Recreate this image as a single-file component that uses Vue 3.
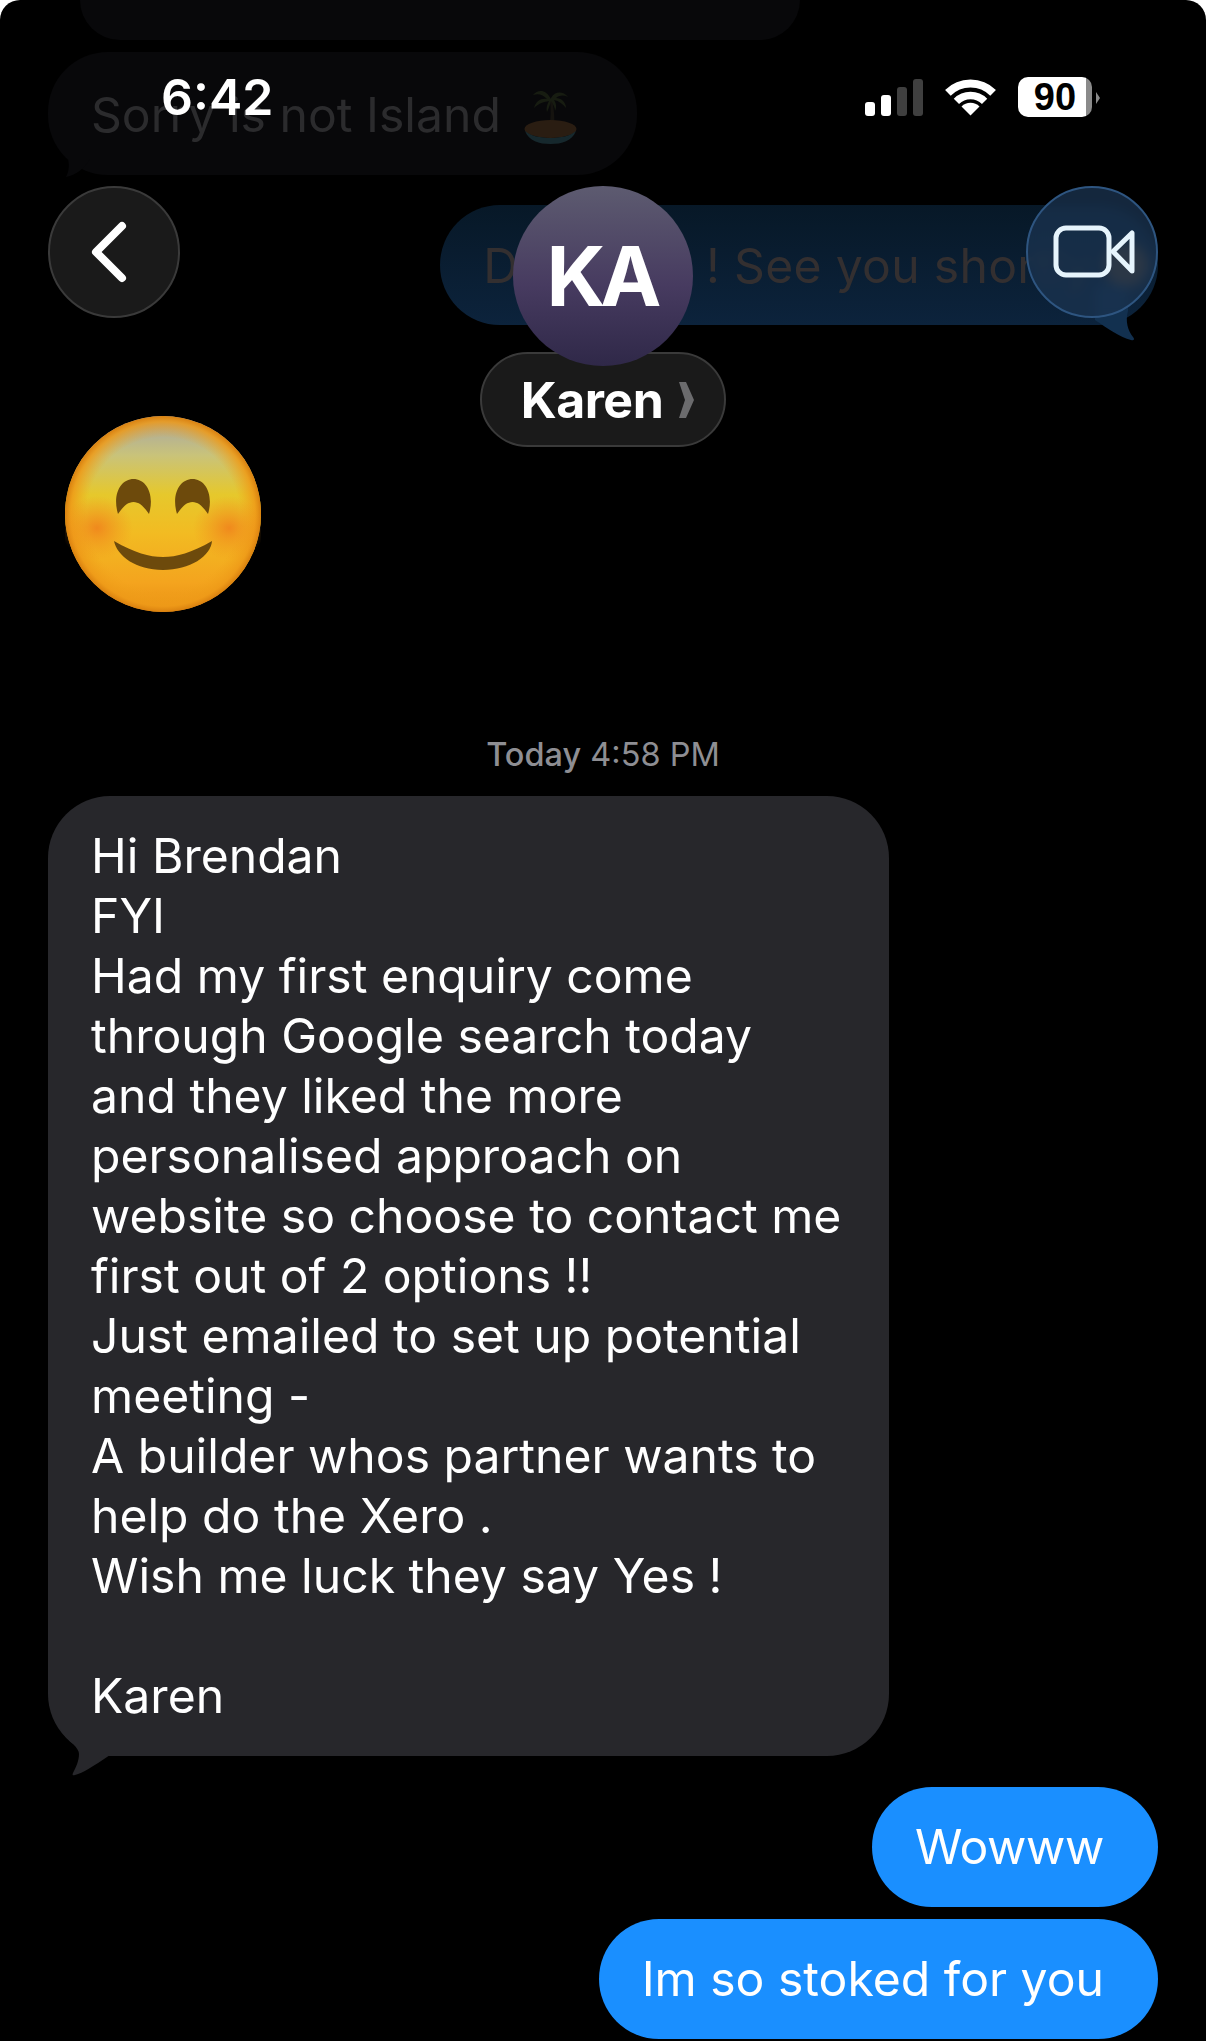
<template>
  <div class="page">
    <div class="thread">
      <div class="ghost ghost-top"></div>
      <div class="ghost ghost-island">
        <span>Sorry is not Island</span>
        <svg class="island" viewBox="0 0 53 60">
          <path d="M26 14c1 10 1 20-1 32h5c1-12 0-22-2-32z" fill="#2a2418" />
          <path d="M27 14C22 4 14 4 9 10c6-2 10 0 14 4-6-1-11 2-13 9 5-5 10-6 15-7-2 4-3 7-2 11 2-4 3-8 4-11 2 3 4 6 4 10 2-4 1-8-1-11 5 1 9 4 12 8 0-6-5-10-10-10 4-3 8-3 12-1-5-6-13-6-17 1z" fill="#2e3a1c" />
          <ellipse cx="26.500" cy="44" rx="26" ry="9" fill="#5e3d1e" />
          <path d="M1 46c4 10 14 13 25.500 13S48 56 52 46c-6 5-15 7-25.500 7S7 51 1 46z" fill="#2d5a63" />
        </svg>
        <svg class="tail tail-ghost" viewBox="0 0 30 30">
          <path d="M4 0C6 8 4 14 2 18c10-2 18-8 24-18z" fill="#08080a" />
        </svg>
      </div>
      <div class="ghost-sent">
        <span>Done too ! See you shortly</span>
        <i class="ghost-emoji"></i>
        <svg class="tail tail-sent" viewBox="0 0 50 60">
          <path d="M5 35C18 44 30 52 41 55c3 1 4-1 2-3-5-6-8-16-5-26V0H5z" fill="#12304f" />
        </svg>
      </div>

      <svg class="smiley" viewBox="0 0 196 196">
        <defs>
          <linearGradient id="face" x1="0" y1="0" x2="0" y2="1">
            <stop offset="0.04" stop-color="#aba99f" />
            <stop offset="0.2" stop-color="#c9c37a" />
            <stop offset="0.4" stop-color="#e6c82c" />
            <stop offset="0.6" stop-color="#f2bb22" />
            <stop offset="0.85" stop-color="#f4a41e" />
            <stop offset="1" stop-color="#ea8f14" />
          </linearGradient>
          <radialGradient id="rim" cx="0.5" cy="0.5" r="0.5">
            <stop offset="0.78" stop-color="#f0a31a" stop-opacity="0" />
            <stop offset="0.94" stop-color="#ee9a18" stop-opacity="0.85" />
            <stop offset="1" stop-color="#d9800f" />
          </radialGradient>
          <radialGradient id="blush" cx="0.5" cy="0.5" r="0.5">
            <stop offset="0" stop-color="#f0801c" stop-opacity="0.85" />
            <stop offset="1" stop-color="#f0901c" stop-opacity="0" />
          </radialGradient>
        </defs>
        <circle cx="98" cy="98" r="98" fill="url(#face)" />
        <circle cx="98" cy="98" r="98" fill="url(#rim)" />
        <ellipse cx="32" cy="112" rx="36" ry="32" fill="url(#blush)" />
        <ellipse cx="164" cy="112" rx="36" ry="32" fill="url(#blush)" />
        <path d="M53 98C47 78 56 63 68.500 63 81 63 90 78 84 98 80 92 75 86 68.500 86 62 86 57 92 53 98z" fill="#6d4a0c" />
        <path d="M112 98C106 78 115 63 127.500 63 140 63 149 78 143 98 139 92 134 86 127.500 86 121 86 116 92 112 98z" fill="#6d4a0c" />
        <path d="M49 125C70 137 84 141 98 141 112 141 126 137 147 125 146 140 125 154 98 154 71 154 52 140 49 125z" fill="#6d4a0c" />
      </svg>

      <div class="stamp"><b>Today</b> 4:58 PM</div>

      <div class="bubble received">{{ message }}
        <svg class="tail tail-received" viewBox="0 0 62 48">
          <path d="M10 0C14 7 18 11 23 15 27 19 29 22 29 25 29 32 26 38 23 44 22 46.500 23 46.500 25 46 33 44 42 38 60 26V0z" fill="#27272b" />
        </svg>
      </div>

      <div class="bubble sent first">Wowww</div>
      <div class="bubble sent">Im so stoked for you</div>
    </div>

    <header class="overlay">
      <div class="status">
        <span class="clock">6:42</span>
        <div class="indicators">
          <div class="signal">
            <i v-for="bar in bars" :key="bar.h" :class="{ off: bar.off }" :style="{ height: bar.h + 'px' }"></i>
          </div>
          <svg class="wifi" viewBox="0 0 51 37" fill="none" stroke="#fff">
            <path d="M2.900 13.900A32 32 0 0 1 48.100 13.900" stroke-width="8" />
            <path d="M11.400 22.400A20 20 0 0 1 39.600 22.400" stroke-width="7.500" />
            <path d="M25.500 36.500L16.500 27.500A12.700 12.700 0 0 1 34.500 27.500z" fill="#fff" stroke="none" />
          </svg>
          <div class="battery"><span>90</span></div>
          <i class="battery-tip"></i>
        </div>
      </div>
      <div class="nav">
        <button class="round back">
          <svg viewBox="0 0 44 64" fill="none" stroke="#fff" stroke-width="8" stroke-linecap="round" stroke-linejoin="round">
            <path d="M35 6L9 32 35 58" />
          </svg>
        </button>
        <div class="contact">
          <div class="avatar">KA</div>
          <div class="name">
            Karen
            <svg viewBox="0 0 15 36"><path d="M0 0h7l8 18-8 18H0l6-18z" fill="#6b6b6d" /></svg>
          </div>
        </div>
        <button class="round video">
          <svg viewBox="0 0 82 54" fill="none" stroke="#e6f4fc" stroke-width="5" stroke-linejoin="round">
            <rect x="3" y="3" width="53" height="47" rx="10" />
            <path d="M60 26.500L79 8V46z" />
          </svg>
        </button>
      </div>
    </header>
  </div>
</template>

<script setup>
const message = `Hi Brendan
FYI
Had my first enquiry come
through Google search today
and they liked the more
personalised approach on
website so choose to contact me
first out of 2 options !!
Just emailed to set up potential
meeting -
A builder whos partner wants to
help do the Xero .
Wish me luck they say Yes !

Karen`

const bars = [
  { h: 14 },
  { h: 21 },
  { h: 29, off: true },
  { h: 37, off: true }
]
</script>

<style>
html,
body {
  background: #fff;
}
</style>

<style scoped>
.page {
  position: relative;
  width: 1206px;
  height: 2041px;
  overflow: hidden;
  background: #000;
  border-radius: 20px 20px 0 0;
  font-family: Inter, "Liberation Sans", sans-serif;
  font-size: 48.1px;
  color: #fff;
}

.thread {
  display: flex;
  flex-direction: column;
  padding: 0 48px;
}

.ghost {
  background: #08080a;
  color: #2b2b2d;
}
.ghost-top {
  width: 720px;
  height: 40px;
  margin-left: 32px;
  border-radius: 0 0 40px 40px;
}
.ghost-island {
  position: relative;
  display: flex;
  align-items: center;
  gap: 23px;
  align-self: flex-start;
  height: 123px;
  margin-top: 12px;
  padding: 2px 60px 0 43px;
  box-sizing: border-box;
  border-radius: 60px;
}
.island {
  width: 53px;
  height: 60px;
  opacity: 0.4;
}

.ghost-sent {
  position: relative;
  display: flex;
  align-items: center;
  align-self: flex-end;
  height: 120px;
  margin-top: 30px;
  padding: 0 10px 0 43px;
  background: linear-gradient(#071827, #0c233c);
  border-radius: 60px;
  color: #332f30;
  letter-spacing: 0.3px;
  white-space: nowrap;
}
.ghost-emoji {
  width: 44px;
  height: 44px;
  margin-left: 12px;
  border-radius: 50%;
  background: #6b4a2a;
}

.tail {
  position: absolute;
}
.tail-ghost {
  left: 16px;
  bottom: -14px;
  width: 30px;
  height: 30px;
}
.tail-sent {
  right: 18px;
  bottom: -20px;
  width: 50px;
  height: 60px;
}
.tail-received {
  left: 2px;
  bottom: -21px;
  width: 62px;
  height: 48px;
}

.smiley {
  width: 196px;
  height: 196px;
  margin: 91px 0 0 17px;
}

.stamp {
  margin-top: 123px;
  font-size: 32.5px;
  line-height: 40px;
  text-align: center;
  color: #8e8e93;
}
.stamp b {
  font-weight: 500;
}

.bubble {
  position: relative;
  padding: 30px 43px;
  line-height: 60px;
  border-radius: 62px;
}
.received {
  width: 841px;
  margin-top: 21px;
  box-sizing: border-box;
  background: #27272b;
  white-space: pre-line;
}
.sent {
  align-self: flex-end;
  margin-top: 12px;
  padding-right: 54px;
  background: #1a8fff;
  border-radius: 60px;
  white-space: nowrap;
}
.sent.first {
  margin-top: 31px;
  letter-spacing: -0.4px;
}

.overlay {
  position: absolute;
  top: 0;
  left: 0;
  right: 0;
  padding: 0 48px;
}
.status {
  display: flex;
  justify-content: space-between;
  align-items: flex-start;
  height: 186px;
  padding: 77px 58px 0 113px;
  box-sizing: border-box;
}
.clock {
  font-size: 50px;
  font-weight: 600;
  line-height: 40px;
}
.indicators {
  display: flex;
  align-items: flex-start;
}
.signal {
  display: flex;
  align-items: flex-end;
  gap: 6px;
  height: 37px;
  margin-top: 2px;
}
.signal i {
  width: 10px;
  border-radius: 3px;
  background: #fff;
}
.signal i.off {
  background: #3f3f3f;
}
.wifi {
  width: 51px;
  height: 37px;
  margin: 2px 0 0 22px;
}
.battery {
  display: flex;
  align-items: center;
  justify-content: center;
  width: 74px;
  height: 40px;
  margin-left: 22px;
  box-sizing: border-box;
  background: linear-gradient(90deg, #fff 92%, #8a8a8a 92%);
  border-radius: 10px;
  color: #000;
  font-family: "Liberation Sans", sans-serif;
  font-size: 38px;
  font-weight: 700;
}
.battery-tip {
  width: 0;
  height: 0;
  margin: 15px 0 0 4px;
  border-style: solid;
  border-width: 6px 0 6px 4px;
  border-color: transparent transparent transparent #8a8a8a;
}

.nav {
  display: grid;
  grid-template-columns: 132px 1fr 132px;
  align-items: start;
}
.round {
  display: flex;
  align-items: center;
  justify-content: center;
  width: 132px;
  height: 132px;
  padding: 0;
  box-sizing: border-box;
  border-radius: 50%;
}
.back {
  background: #1a1a1a;
  border: 2px solid #3a3a3a;
}
.back svg {
  width: 44px;
  height: 64px;
  margin-right: 10px;
}
.video {
  background: rgba(26, 50, 78, 0.78);
  border: 2px solid #2e5580;
  backdrop-filter: blur(6px);
}
.video svg {
  width: 82px;
  height: 54px;
  margin-left: 4px;
}

.contact {
  display: flex;
  flex-direction: column;
  align-items: center;
}
.avatar {
  position: relative;
  z-index: 1;
  display: flex;
  align-items: center;
  justify-content: center;
  width: 180px;
  height: 180px;
  padding-right: 3px;
  box-sizing: border-box;
  border-radius: 50%;
  background: linear-gradient(#5d5b70, #473b60 55%, #2f2848);
  font-size: 82px;
  font-weight: 700;
  letter-spacing: -5px;
}
.name {
  display: flex;
  align-items: center;
  gap: 16px;
  height: 95px;
  margin-top: -14px;
  padding: 0 30px 0 39px;
  box-sizing: border-box;
  background: #1a1a1a;
  border: 2px solid #3a3a3a;
  border-radius: 48px;
  font-size: 50px;
  font-weight: 700;
  letter-spacing: -0.5px;
}
.name svg {
  width: 15px;
  height: 36px;
}
</style>
